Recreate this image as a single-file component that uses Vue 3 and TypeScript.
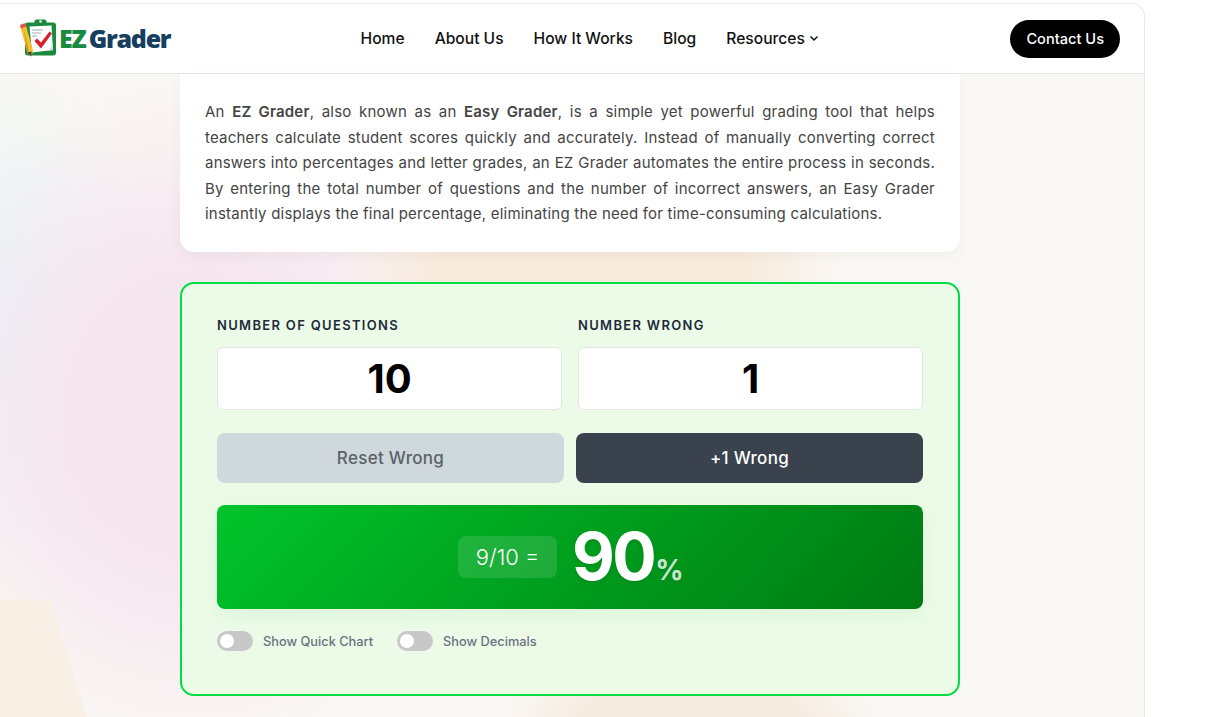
<template>
  <div class="page">
    <div class="shell">
      <header class="topbar">
        <a class="logo" href="#">
          <svg class="logo-icon" width="38" height="38" viewBox="0 0 38 38">
            <rect x="6" y="3.5" width="31" height="33" rx="3" fill="#1a8a3e" />
            <rect x="15.5" y="0.5" width="12" height="7" rx="2" fill="#1a8a3e" />
            <circle cx="21.5" cy="2.5" r="1.2" fill="#ffffff" />
            <path d="M10.5 7.5L32.5 6.5L34 31L13 33.5Z" fill="#ffffff" />
            <path d="M33 27L34 31L29 32Z" fill="#d8dcd8" />
            <path d="M13 11H24M13 14H22M13 17H18" stroke="#c3c8cc" stroke-width="1.6" />
            <path d="M15.5 22L22 29.5L33 14.5L30.5 12.5L22 23.5L18 19.5Z" fill="#d81f2e" />
            <path d="M1.5 8.5L7 6.5L14 31.5L12.5 37.5L8.5 33.5Z" fill="#f3c12d" />
            <path d="M4.2 7.5L10.5 33.5L8.5 33.5Z" fill="#d99a1c" />
            <path d="M0.8 6L6.5 4L7.6 7.4L2 9.5Z" fill="#e2574c" />
            <path d="M8.5 33.5L12.5 32.5L12.5 37.5Z" fill="#3c3c3c" />
          </svg>
          <span class="logo-text"><span class="logo-ez">EZ</span> Grader</span>
        </a>
        <nav class="nav">
          <a v-for="item in navItems" :key="item" href="#">{{ item }}</a>
          <a href="#" class="nav-more">
            Resources
            <svg width="10" height="10" viewBox="0 0 10 10" fill="none">
              <path d="M1.5 3.5L5 7L8.5 3.5" stroke="#111111" stroke-width="1.5" />
            </svg>
          </a>
        </nav>
        <a class="contact" href="#">Contact Us</a>
      </header>

      <main class="content">
        <section class="intro">
          <p>
            An <strong>EZ Grader</strong>, also known as an <strong>Easy Grader</strong>, is a simple yet
            powerful grading tool that helps teachers calculate student scores quickly and accurately.
            Instead of manually converting correct answers into percentages and letter grades, an EZ
            Grader automates the entire process in seconds. By entering the total number of questions and
            the number of incorrect answers, an Easy Grader instantly displays the final percentage,
            eliminating the need for time-consuming calculations.
          </p>
        </section>

        <section class="calc">
          <div class="fields">
            <label class="field">
              <span>Number of Questions</span>
              <input v-model.number="questions" type="text" />
            </label>
            <label class="field">
              <span>Number Wrong</span>
              <input v-model.number="wrong" type="text" />
            </label>
          </div>

          <div class="actions">
            <button class="btn-reset" type="button" @click="wrong = 0">Reset Wrong</button>
            <button class="btn-add" type="button" @click="wrong++">+1 Wrong</button>
          </div>

          <div class="result">
            <span class="fraction">{{ questions - wrong }}/{{ questions }} =</span>
            <span class="score">{{ percent }}<small>%</small></span>
          </div>

          <div class="toggles">
            <label v-for="t in toggles" :key="t" class="toggle">
              <span class="switch"><span class="knob"></span></span>
              {{ t }}
            </label>
          </div>
        </section>
      </main>
    </div>
  </div>
</template>

<script setup lang="ts">
import { computed, ref } from 'vue'

const navItems = ['Home', 'About Us', 'How It Works', 'Blog']
const toggles = ['Show Quick Chart', 'Show Decimals']

const questions = ref(10)
const wrong = ref(1)

const percent = computed(() => {
  if (!questions.value) return 0
  return Math.round(((questions.value - wrong.value) / questions.value) * 100)
})
</script>

<style>
html,
body {
  margin: 0;
  background: #ffffff;
  overflow: hidden;
}
</style>

<style scoped>
.page {
  width: 1208px;
  height: 717px;
  overflow: hidden;
  font-family: Inter, 'Noto Sans', sans-serif;
}

.shell {
  box-sizing: border-box;
  width: 1145px;
  height: 717px;
  margin-top: 3px;
  border-top: 1px solid #e8e8e8;
  border-right: 1px solid #e8e8e8;
  border-top-right-radius: 14px;
  overflow: hidden;
  background:
    linear-gradient(72.4deg, #f8f0e5 70%, transparent 70.5%) 0 596px / 87px 117px no-repeat,
    radial-gradient(ellipse 190px 90px at 690px 725px, #f6ebe1 60%, transparent 100%),
    radial-gradient(ellipse 250px 150px at 590px 270px, #f8eadc 60%, transparent 100%),
    radial-gradient(ellipse 300px 340px at 190px 410px, #f5e5ef 42%, transparent 100%),
    radial-gradient(ellipse 170px 260px at 0 310px, #e8f5f6 15%, transparent 100%),
    #faf8f4;
}

.topbar {
  display: flex;
  align-items: center;
  justify-content: space-between;
  box-sizing: border-box;
  height: 70px;
  padding: 0 24px 0 19px;
  background: #ffffff;
  border-bottom: 1px solid #e6e6e6;
}

.logo {
  display: flex;
  align-items: center;
  gap: 2px;
  width: 154px;
  text-decoration: none;
}

.logo-icon {
  margin-top: -2px;
}

.logo-text {
  margin-top: -2px;
  font-family: 'Open Sans', sans-serif;
  font-size: 25px;
  font-weight: 800;
  letter-spacing: -1.25px;
  word-spacing: -2px;
  color: #173e5f;
  white-space: nowrap;
}

.logo-ez {
  color: #1a8a3e;
}

.nav {
  display: flex;
  align-items: center;
  gap: 30px;
  margin: -1px 0 0 -4px;
}

.nav a {
  font-size: 15.6px;
  font-weight: 500;
  color: #111111;
  text-decoration: none;
}

.nav-more {
  display: flex;
  align-items: center;
  gap: 4px;
}

.contact {
  padding: 10px 16px;
  border-radius: 19px;
  background: #000000;
  color: #ffffff;
  font-size: 14.6px;
  font-weight: 500;
  line-height: 18px;
  text-decoration: none;
}

.content {
  box-sizing: border-box;
  width: 780px;
  margin-left: 180px;
}

.intro {
  box-sizing: border-box;
  height: 178px;
  padding: 25px 25px 0;
  background: #ffffff;
  border-radius: 0 0 14px 14px;
  box-shadow: 0 4px 16px rgba(0, 0, 0, 0.04);
}

.intro p {
  margin: 0;
  font-size: 15px;
  line-height: 25.5px;
  letter-spacing: 0.22px;
  color: #444444;
  text-align: justify;
}

.intro strong {
  font-weight: 600;
}

.calc {
  box-sizing: border-box;
  height: 414px;
  margin-top: 30px;
  padding: 33px 35px 0;
  background: #ebfbe7;
  border: 2px solid #00dd44;
  border-radius: 14px;
}

.fields {
  display: grid;
  grid-template-columns: 1fr 1fr;
  gap: 16px;
}

.field span {
  display: block;
  margin-bottom: 14px;
  font-size: 13px;
  font-weight: 600;
  line-height: 16px;
  letter-spacing: 1.32px;
  text-transform: uppercase;
  color: #1e2a3a;
}

.field input {
  box-sizing: border-box;
  display: block;
  width: 100%;
  height: 63px;
  border: 1px solid #e3e6e3;
  border-radius: 6px;
  background: #ffffff;
  font-family: Inter, sans-serif;
  font-size: 40px;
  font-weight: 700;
  color: #000000;
  text-align: center;
  outline: none;
}

.actions {
  display: grid;
  grid-template-columns: 1fr 1fr;
  gap: 12px;
  margin-top: 23px;
}

.actions button {
  height: 50px;
  border: 0;
  border-radius: 8px;
  font-family: Inter, sans-serif;
  font-size: 17px;
  font-weight: 500;
  letter-spacing: 0.3px;
}

.btn-reset {
  background: #cfd8dc;
  color: #59636a;
}

.btn-add {
  background: #3a424e;
  color: #ffffff;
}

.result {
  display: flex;
  align-items: center;
  justify-content: center;
  gap: 15px;
  height: 104px;
  margin-top: 22px;
  padding-left: 2px;
  border-radius: 8px;
  background: linear-gradient(135deg, #00c42b, #007a12);
  box-shadow: 0 6px 20px rgba(0, 160, 40, 0.06);
}

.fraction {
  padding: 0 17.5px;
  border-radius: 8px;
  background: rgba(255, 255, 255, 0.12);
  font-size: 22px;
  font-weight: 300;
  line-height: 42px;
  color: #ffffff;
}

.score {
  margin-top: -2px;
  font-size: 66px;
  font-weight: 700;
  line-height: 1;
  letter-spacing: -2.5px;
  color: #ffffff;
  text-shadow: 0 2px 4px rgba(0, 0, 0, 0.1);
}

.score small {
  margin-left: 1px;
  font-size: 28px;
  font-weight: 700;
  letter-spacing: 0;
  color: rgba(255, 255, 255, 0.8);
}

.toggles {
  display: flex;
  gap: 24px;
  margin-top: 22px;
}

.toggle {
  display: flex;
  align-items: center;
  gap: 10px;
  font-size: 12.8px;
  font-weight: 500;
  color: #6b7280;
}

.switch {
  display: flex;
  align-items: center;
  width: 36px;
  height: 20px;
  padding: 0 3px;
  box-sizing: border-box;
  border-radius: 10px;
  background: #c8c8c8;
}

.knob {
  width: 14px;
  height: 14px;
  border-radius: 50%;
  background: #ffffff;
}
</style>
